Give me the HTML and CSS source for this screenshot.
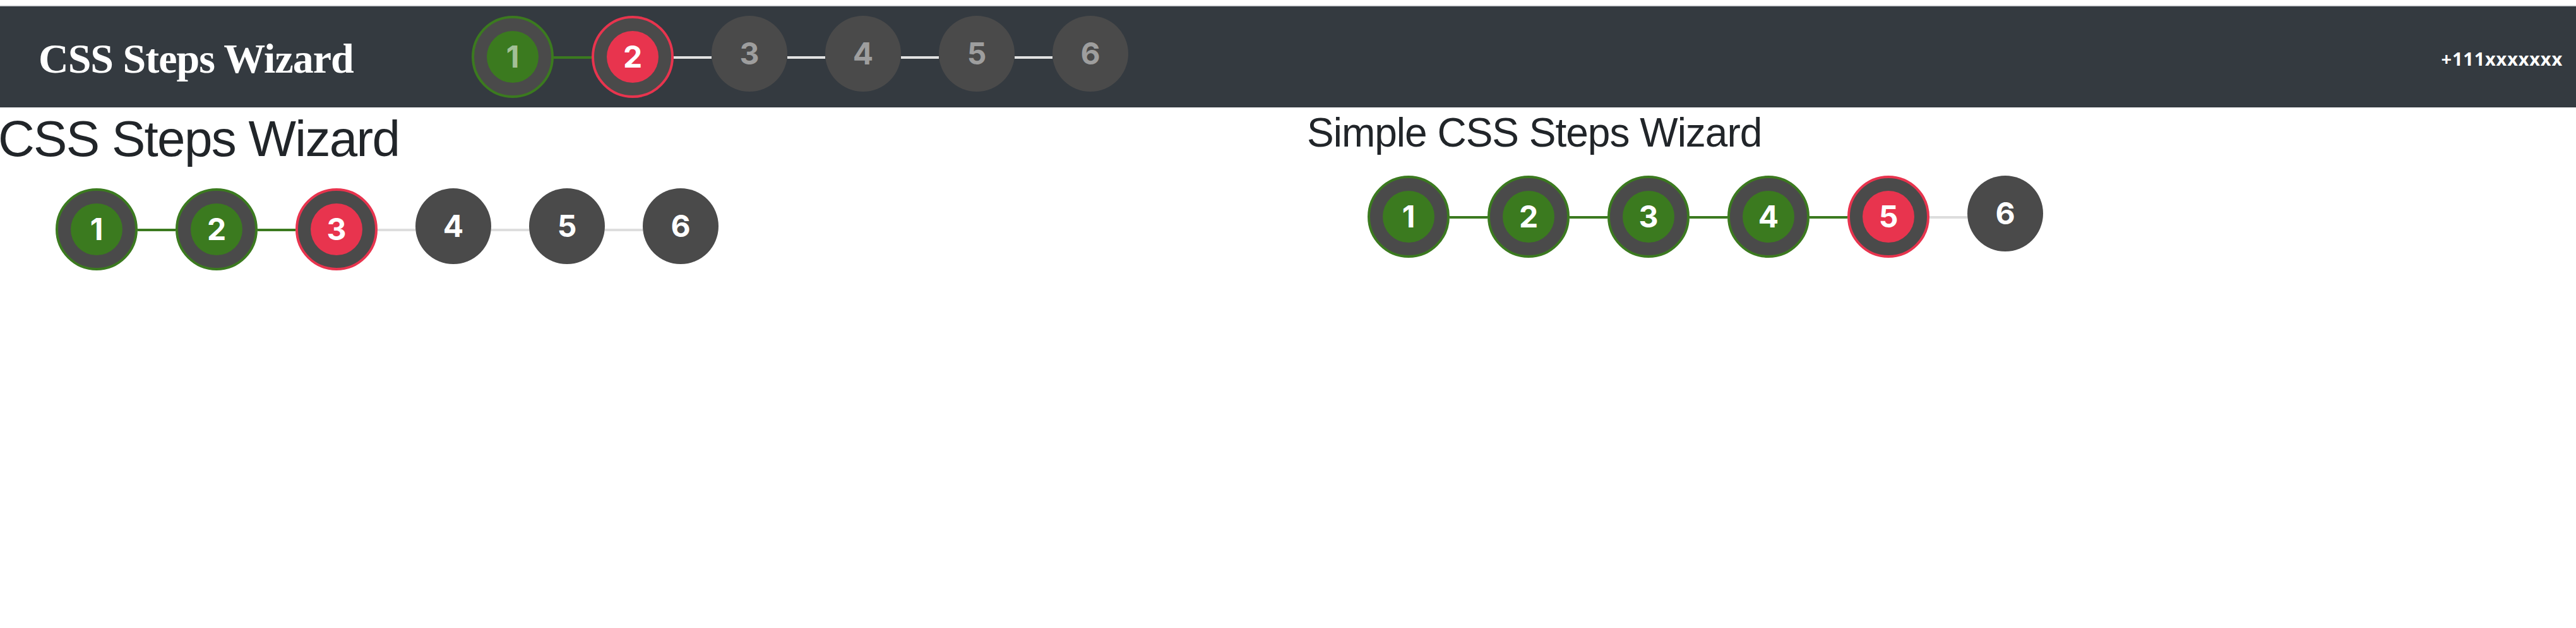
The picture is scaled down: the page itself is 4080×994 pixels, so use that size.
FILE: index.html
```html
<!DOCTYPE html>
<html lang="en">
<head>
<meta charset="utf-8">
<title>CSS Steps Wizard</title>
<link rel="stylesheet" href="styles.css">
</head>
<body>
<header class="navbar">
  <div class="brand">CSS Steps Wizard</div>
  <ol class="steps steps--nav">
    <li class="step step--done"><span class="dot">1</span></li>
    <li class="link link--done"></li>
    <li class="step step--current"><span class="dot">2</span></li>
    <li class="link"></li>
    <li class="step"><span class="dot">3</span></li>
    <li class="link"></li>
    <li class="step"><span class="dot">4</span></li>
    <li class="link"></li>
    <li class="step"><span class="dot">5</span></li>
    <li class="link"></li>
    <li class="step"><span class="dot">6</span></li>
  </ol>
  <div class="phone">+111xxxxxxx</div>
</header>
<main class="row">
  <section class="col col--left">
    <h1 class="title">CSS Steps Wizard</h1>
    <ol class="steps steps--left">
      <li class="step step--done"><span class="dot">1</span></li>
      <li class="link link--done"></li>
      <li class="step step--done"><span class="dot">2</span></li>
      <li class="link link--done"></li>
      <li class="step step--current"><span class="dot">3</span></li>
      <li class="link"></li>
      <li class="step"><span class="dot">4</span></li>
      <li class="link"></li>
      <li class="step"><span class="dot">5</span></li>
      <li class="link"></li>
      <li class="step"><span class="dot">6</span></li>
    </ol>
  </section>
  <section class="col col--right">
    <h2 class="subtitle">Simple CSS Steps Wizard</h2>
    <ol class="steps steps--right">
      <li class="step step--done"><span class="dot">1</span></li>
      <li class="link link--done"></li>
      <li class="step step--done"><span class="dot">2</span></li>
      <li class="link link--done"></li>
      <li class="step step--done"><span class="dot">3</span></li>
      <li class="link link--done"></li>
      <li class="step step--done"><span class="dot">4</span></li>
      <li class="link link--done"></li>
      <li class="step step--current"><span class="dot">5</span></li>
      <li class="link"></li>
      <li class="step"><span class="dot">6</span></li>
    </ol>
  </section>
</main>
</body>
</html>
```

FILE: styles.css
```css
html, body {
  margin: 0;
  padding: 0;
  background: #ffffff;
}

body {
  font-family: "Liberation Sans", Arial, sans-serif;
  color: #212529;
  padding-top: 8px;
}

/* ---------- navbar ---------- */
.navbar {
  display: flex;
  align-items: center;
  height: 160px;
  background: #343a40;
  border-top: 2px solid #dcdee1;
  padding: 0 21px 0 61px;
}

.brand {
  flex: 0 0 auto;
  width: 686px;
  font-family: "Liberation Serif", "Times New Roman", serif;
  font-weight: 700;
  font-size: 66px;
  letter-spacing: -1px;
  color: #ffffff;
  white-space: nowrap;
  line-height: 1;
  padding-top: 6px;
}

.phone {
  margin-left: auto;
  font-family: "Open Sans", "Liberation Sans", sans-serif;
  font-weight: 700;
  font-size: 29px;
  letter-spacing: 0.8px;
  color: #ffffff;
  padding-top: 4px;
}

/* ---------- steps ---------- */
.steps {
  display: flex;
  align-items: flex-start;
  list-style: none;
  margin: 0;
  padding: 0;
}

.step {
  flex: 0 0 auto;
  width: 120px;
  height: 120px;
  border-radius: 50%;
  background: #4a4a4a;
  display: flex;
  align-items: center;
  justify-content: center;
}

.dot {
  font-family: "Inter", "Liberation Sans", sans-serif;
  font-weight: 700;
  font-size: 48px;
  line-height: 1;
  color: #ffffff;
}

.step--done,
.step--current {
  width: 130px;
  height: 130px;
  box-sizing: border-box;
  border: 4px solid #3b7a1f;
}

.step--current {
  border-color: #e8344e;
}

.step--done .dot,
.step--current .dot {
  width: 82px;
  height: 82px;
  border-radius: 50%;
  display: flex;
  align-items: center;
  justify-content: center;
  background: #3b7a1f;
}

.step--current .dot {
  background: #e8344e;
}

.link {
  flex: 0 0 auto;
  width: 60px;
  height: 4px;
  margin-top: 64px;
  background: #dddddd;
}

.link--done {
  background: #3b7a1f;
}

/* nav variant */
.steps--nav .step .dot {
  color: #9e9e9e;
}

.steps--nav .step--done .dot {
  color: rgba(255, 255, 255, 0.55);
}

.steps--nav .step--current .dot {
  color: #ffffff;
}

.steps--nav .link {
  background: #e2e2e2;
}

.steps--nav .link--done {
  background: #3b7a1f;
}

/* ---------- content ---------- */
.row {
  display: grid;
  grid-template-columns: 1fr 1fr;
}

.col--right {
  padding-left: 30px;
}

.title {
  margin: 0;
  font-weight: 400;
  font-size: 80px;
  line-height: 100px;
  letter-spacing: -1.7px;
  margin-left: -3px;
}

.subtitle {
  margin: 0;
  font-weight: 400;
  font-size: 64px;
  line-height: 80px;
  letter-spacing: -1px;
}

.steps--left {
  margin-top: 28px;
  margin-left: 88px;
}

.steps--right {
  margin-top: 28px;
  margin-left: 96px;
}
```
